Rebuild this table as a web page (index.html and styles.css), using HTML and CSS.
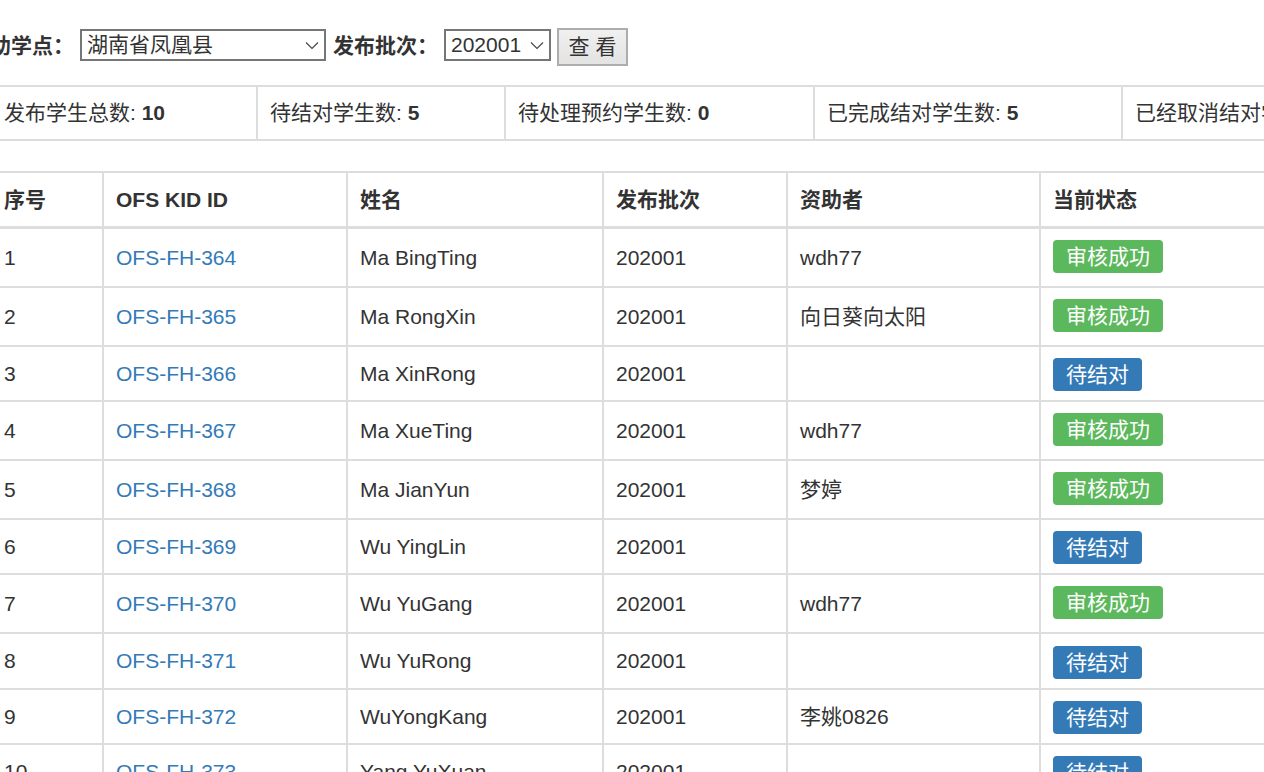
FILE: index.html
```html
<!DOCTYPE html>
<html lang="zh-CN">
<head>
<meta charset="utf-8">
<title>发布学生列表</title>
<link rel="stylesheet" href="styles.css">
</head>
<body>
<div class="page">
  <form class="filter">
    <label class="flabel">助学点：</label>
    <div class="select sel-site">
      <span class="sel-text">湖南省凤凰县</span>
      <svg class="chev" width="14" height="9" viewBox="0 0 14 9"><path d="M1 1.5 L7 7.5 L13 1.5" fill="none" stroke="#444" stroke-width="1.1"/></svg>
    </div>
    <label class="flabel">发布批次：</label>
    <div class="select sel-batch">
      <span class="sel-text">202001</span>
      <svg class="chev" width="14" height="9" viewBox="0 0 14 9"><path d="M1 1.5 L7 7.5 L13 1.5" fill="none" stroke="#444" stroke-width="1.1"/></svg>
    </div>
    <button type="button" class="btn">查 看</button>
  </form>

  <div class="stats">
    <div class="stat s1">发布学生总数: <b>10</b></div>
    <div class="stat s2">待结对学生数: <b>5</b></div>
    <div class="stat s3">待处理预约学生数: <b>0</b></div>
    <div class="stat s4">已完成结对学生数: <b>5</b></div>
    <div class="stat s5">已经取消结对学生数: <b>0</b></div>
  </div>

  <div class="grid">
    <div class="row head">
      <div class="c c1">序号</div>
      <div class="c c2">OFS KID ID</div>
      <div class="c c3">姓名</div>
      <div class="c c4">发布批次</div>
      <div class="c c5">资助者</div>
      <div class="c c6">当前状态</div>
    </div>
    <div class="row ok">
      <div class="c c1">1</div><div class="c c2"><a href="#">OFS-FH-364</a></div><div class="c c3">Ma BingTing</div><div class="c c4">202001</div><div class="c c5">wdh77</div><div class="c c6"><span class="lbl green">审核成功</span></div>
    </div>
    <div class="row ok">
      <div class="c c1">2</div><div class="c c2"><a href="#">OFS-FH-365</a></div><div class="c c3">Ma RongXin</div><div class="c c4">202001</div><div class="c c5">向日葵向太阳</div><div class="c c6"><span class="lbl green">审核成功</span></div>
    </div>
    <div class="row wait">
      <div class="c c1">3</div><div class="c c2"><a href="#">OFS-FH-366</a></div><div class="c c3">Ma XinRong</div><div class="c c4">202001</div><div class="c c5"></div><div class="c c6"><span class="lbl blue">待结对</span></div>
    </div>
    <div class="row ok">
      <div class="c c1">4</div><div class="c c2"><a href="#">OFS-FH-367</a></div><div class="c c3">Ma XueTing</div><div class="c c4">202001</div><div class="c c5">wdh77</div><div class="c c6"><span class="lbl green">审核成功</span></div>
    </div>
    <div class="row ok">
      <div class="c c1">5</div><div class="c c2"><a href="#">OFS-FH-368</a></div><div class="c c3">Ma JianYun</div><div class="c c4">202001</div><div class="c c5">梦婷</div><div class="c c6"><span class="lbl green">审核成功</span></div>
    </div>
    <div class="row wait">
      <div class="c c1">6</div><div class="c c2"><a href="#">OFS-FH-369</a></div><div class="c c3">Wu YingLin</div><div class="c c4">202001</div><div class="c c5"></div><div class="c c6"><span class="lbl blue">待结对</span></div>
    </div>
    <div class="row ok">
      <div class="c c1">7</div><div class="c c2"><a href="#">OFS-FH-370</a></div><div class="c c3">Wu YuGang</div><div class="c c4">202001</div><div class="c c5">wdh77</div><div class="c c6"><span class="lbl green">审核成功</span></div>
    </div>
    <div class="row wait w56">
      <div class="c c1">8</div><div class="c c2"><a href="#">OFS-FH-371</a></div><div class="c c3">Wu YuRong</div><div class="c c4">202001</div><div class="c c5"></div><div class="c c6"><span class="lbl blue">待结对</span></div>
    </div>
    <div class="row wait">
      <div class="c c1">9</div><div class="c c2"><a href="#">OFS-FH-372</a></div><div class="c c3">WuYongKang</div><div class="c c4">202001</div><div class="c c5">李姚0826</div><div class="c c6"><span class="lbl blue">待结对</span></div>
    </div>
    <div class="row wait">
      <div class="c c1">10</div><div class="c c2"><a href="#">OFS-FH-373</a></div><div class="c c3">Yang YuXuan</div><div class="c c4">202001</div><div class="c c5"></div><div class="c c6"><span class="lbl blue">待结对</span></div>
    </div>
  </div>
</div>
</body>
</html>
```

FILE: styles.css
```css
html, body {
  margin: 0;
  padding: 0;
  overflow: hidden;
  background: #fff;
}
body {
  font-family: "Liberation Sans", Arial, "Noto Sans CJK SC", sans-serif;
  font-size: 21px;
  line-height: 30px;
  color: #333;
}
.page {
  margin-left: -10px;
  width: 1400px;
}

/* filter form */
.filter {
  display: flex;
  align-items: flex-start;
  margin: 0;
  padding-top: 28px;
  height: 38px;
}
.flabel {
  font-weight: bold;
  line-height: 36px;
  white-space: nowrap;
}
.flabel + .select { margin-left: 6px; }
.select + .flabel { margin-left: 7px; }
.select {
  box-sizing: border-box;
  margin-top: 1px;
  height: 32px;
  border: 2px solid #767676;
  background: #fff;
  display: flex;
  align-items: center;
  justify-content: space-between;
  padding: 0 5px;
  line-height: 28px;
}
.sel-site { width: 246px; }
.sel-batch { width: 107px; }
.sel-text { white-space: nowrap; }
.chev { flex: none; margin-top: 1px; }
.btn {
  box-sizing: border-box;
  margin-left: 6px;
  width: 71px;
  height: 38px;
  border: 2px solid #adadad;
  background: linear-gradient(#f0f0f0, #e3e3e3);
  font-family: "Liberation Sans", "Noto Sans CJK SC", sans-serif;
  font-size: 21px;
  color: #333;
  padding: 0;
  line-height: 32px;
}

/* stats bar */
.stats {
  display: flex;
  margin-top: 19px;
  border-top: 2px solid #ddd;
  border-bottom: 2px solid #ddd;
  height: 52px;
}
.stat {
  box-sizing: border-box;
  border-left: 2px solid #ddd;
  padding: 0 12px;
  display: flex;
  align-items: center;
  white-space: pre;
}
.stat b { font-weight: bold; }
.s1 { width: 266px; }
.s2 { width: 248px; }
.s3 { width: 309px; }
.s4 { width: 308px; }
.s5 { width: 269px; }

/* data grid */
.grid {
  margin-top: 30px;
  border-top: 2px solid #ddd;
}
.row {
  display: flex;
  border-bottom: 2px solid #ddd;
}
.row.head {
  height: 53px;
  border-bottom: 3px solid #ddd;
  font-weight: bold;
}
.row.ok { height: 57px; }
.row.wait { height: 53px; }
.row.wait.w56 { height: 54px; }
.c {
  box-sizing: border-box;
  border-left: 2px solid #ddd;
  padding: 0 12px;
  display: flex;
  align-items: center;
  white-space: nowrap;
}
.c1 { width: 112px; }
.c2 { width: 244px; }
.c3 { width: 256px; }
.c4 { width: 184px; }
.c5 { width: 253px; }
.c6 { width: 300px; }
a {
  color: #337ab7;
  text-decoration: none;
}
.lbl {
  display: inline-block;
  color: #fff;
  height: 33px;
  line-height: 33px;
  padding: 0 13px;
  border-radius: 4px;
  font-size: 21px;
}
.green { background: #5cb85c; margin-top: -2px; }
.blue { background: #337ab7; margin-top: 2px; }
```
